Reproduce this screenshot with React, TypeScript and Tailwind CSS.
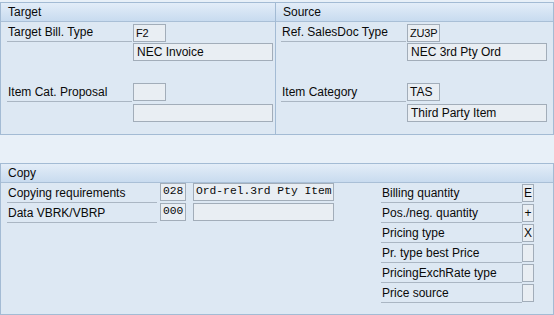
import React from "react";

const Box = ({ w, children, mono, center, className = "" }: { w: string; children?: React.ReactNode; mono?: boolean; center?: boolean; className?: string }) => (
  <div
    className={`${w} h-[18px] border border-[#a2adb9] bg-[#e9eef3] flex items-center leading-none whitespace-nowrap ${mono ? "overflow-hidden" : ""} ${center ? "justify-center" : mono ? "pl-[2px]" : "pl-[3px]"} ${mono ? "font-['Liberation_Mono'] text-[11.3px]" : ""} ${className}`}
  >
    {children}
  </div>
);

const Label = ({ w, children }: { w: string; children?: React.ReactNode }) => (
  <div className={`${w} h-[20px] border-b border-[#aab6c3] flex items-center pl-[1px] pt-[1px] whitespace-nowrap`}>{children}</div>
);

const Header = ({ children }: { children: React.ReactNode }) => (
  <div className="h-[19px] border-b border-[#a9bfd6] bg-gradient-to-b from-[#e3edf8] to-[#c8dbef] flex items-center pl-[7px]">{children}</div>
);

const FieldPanel = ({ title, l1, v1, d1, l2, v2, d2, pad }: { title: string; l1: string; v1: string; d1: string; l2: string; v2: string; d2: string; pad: string }) => (
  <div className="flex-1 flex flex-col">
    <Header>{title}</Header>
    <div className={`flex flex-col ${pad}`}>
      <div className="flex h-[20px] items-start">
        <Label w="w-[125px]">{l1}</Label>
        <div className="ml-[1px] mt-[2px]"><Box w="w-[33px]" className="!pl-[2px] text-[11px] tracking-[-0.2px]">{v1}</Box></div>
      </div>
      <div className="flex h-[20px] items-start">
        <div className="w-[125px]" />
        <div className="ml-[1px] mt-[1px]"><Box w="w-[140px]">{d1}</Box></div>
      </div>
      <div className="h-[20px]" />
      <div className="flex h-[20px] items-start">
        <Label w="w-[125px]">{l2}</Label>
        <div className="ml-[1px] mt-[1px]"><Box w="w-[33px]" className="!pl-[2px]">{v2}</Box></div>
      </div>
      <div className="flex h-[20px] items-start">
        <div className="w-[125px]" />
        <div className="ml-[1px] mt-[2px]"><Box w="w-[140px]">{d2}</Box></div>
      </div>
    </div>
  </div>
);

export default function App() {
  const right: [string, string][] = [
    ["Billing quantity", "E"],
    ["Pos./neg. quantity", "+"],
    ["Pricing type", "X"],
    ["Pr. type best Price", ""],
    ["PricingExchRate type", ""],
    ["Price source", ""],
  ];
  return (
    <div className="w-[554px] h-[315px] overflow-hidden bg-[#e8f0f8] pt-[2px] font-['Liberation_Sans',Arial,sans-serif] text-[12px] text-[#0a0a0a]">
      <div className="flex h-[133px] border border-[#a3bbd4] bg-[#dde8f3]">
        <div className="w-[275px] border-r border-[#a3bbd4] flex">
          <FieldPanel title="Target" l1="Target Bill. Type" v1="F2" d1="NEC Invoice" l2="Item Cat. Proposal" v2="" d2="" pad="pl-[6px]" />
        </div>
        <div className="flex-1 flex">
          <FieldPanel title="Source" l1="Ref. SalesDoc Type" v1="ZU3P" d1="NEC 3rd Pty Ord" l2="Item Category" v2="TAS" d2="Third Party Item" pad="pl-[5px]" />
        </div>
      </div>
      <div className="mt-[28px] h-[152px] border border-[#a3bbd4] bg-[#dde8f3] flex flex-col">
        <Header>Copy</Header>
        <div className="flex">
          <div className="w-[380px] pl-[6px] flex flex-col">
            <div className="flex h-[20px] items-start">
              <Label w="w-[150px]">Copying requirements</Label>
              <div className="ml-[3px]"><Box w="w-[26px]" mono>028</Box></div>
              <div className="ml-[7px]"><Box w="w-[141px]" mono>Ord-rel.3rd Pty Item</Box></div>
            </div>
            <div className="flex h-[20px] items-start">
              <Label w="w-[150px]">Data VBRK/VBRP</Label>
              <div className="ml-[3px]"><Box w="w-[26px]" mono>000</Box></div>
              <div className="ml-[7px]"><Box w="w-[141px]" mono></Box></div>
            </div>
          </div>
          <div className="flex flex-col">
            {right.map(([l, v]) => (
              <div key={l} className="flex h-[20px] items-start">
                <Label w="w-[141px]">{l}</Label>
                <div className="mt-[1px]"><Box w="w-[12px]" center>{v}</Box></div>
              </div>
            ))}
          </div>
        </div>
      </div>
    </div>
  );
}
